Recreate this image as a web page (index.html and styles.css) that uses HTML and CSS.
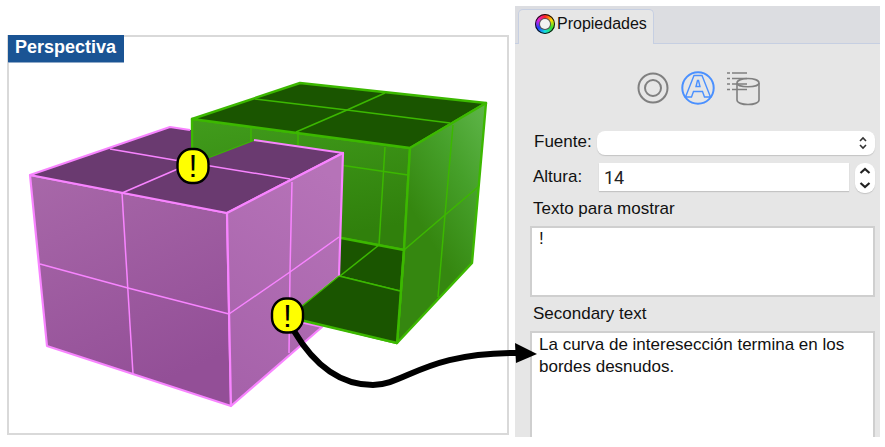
FILE: index.html
```html
<!DOCTYPE html>
<html lang="es">
<head>
<meta charset="utf-8">
<title>Propiedades</title>
<link rel="stylesheet" href="styles.css">
</head>
<body>
<div class="page">
  <section class="viewport">
    <div class="viewport-label">Perspectiva</div>
    <svg class="scene" viewBox="9 37 498 396" width="498" height="396">
      <defs>
        <linearGradient id="gRight" x1="0.9" y1="0" x2="0.5" y2="0.65">
          <stop offset="0" stop-color="#5cb346"/><stop offset="0.45" stop-color="#46a02a"/><stop offset="1" stop-color="#358710"/>
        </linearGradient>
        <linearGradient id="gFront" x1="0" y1="0" x2="0.3" y2="1">
          <stop offset="0" stop-color="#419c1c"/><stop offset="1" stop-color="#30800c"/>
        </linearGradient>
        <linearGradient id="pLeft" x1="0" y1="0" x2="0.4" y2="1">
          <stop offset="0" stop-color="#a868a9"/><stop offset="1" stop-color="#934f97"/>
        </linearGradient>
        <linearGradient id="pRight" x1="0.6" y1="0" x2="0.3" y2="1">
          <stop offset="0" stop-color="#b673b8"/><stop offset="1" stop-color="#a662aa"/>
        </linearGradient>
      </defs>
      <!-- green solid -->
      <g class="edge-green">
        <polygon class="fill-front" points="192,119 410,148 404,250 340,238 340,160 254,141 192,165"/>
        <polygon class="fill-dark" points="192,119 300,83 486,103 410,148"/>
        <polygon class="fill-right" points="410,148 486,103 472,263 397,343 404,250"/>
        <polygon class="fill-dark" points="336,237 404,250 397,343 296,318 296,311 339,276"/>
        <g class="thin">
          <polyline points="255,99 347,110 450,123"/>
          <polyline points="385,93 347,110 296,132"/>
          <polyline points="453,125 445,215 438,297"/>
          <polyline points="404,250 445,215 478,187"/>
          <line x1="251" y1="127" x2="251" y2="142"/>
          <line x1="298" y1="133" x2="298" y2="145"/>
          <line x1="385" y1="147" x2="379" y2="245"/>
          <line x1="340" y1="165" x2="408" y2="175"/>
          <line x1="379" y1="245" x2="296" y2="311"/>
          <line x1="339" y1="276" x2="400" y2="291"/>
        </g>
      </g>
      <!-- purple solid -->
      <g class="edge-pink">
        <polygon class="fill-pleft" points="30,175 227,213 231,406 47,346"/>
        <polygon class="fill-ptop" points="30,175 170,127 191,130 191,165 254,141 343,153 227,213"/>
        <polyline class="pink-edge" points="227,213 30,175 170,127 190,130"/>
        <polyline class="pink-edge" points="254,140 343,153 227,213"/>
        <polygon class="fill-pright" points="227,213 343,153 339,276 296,312 300,322 322,327 231,406"/>
        <g class="thin">
          <line x1="122" y1="193" x2="133" y2="374"/>
          <polyline points="40,264 128,288 229,314"/>
          <polyline points="229,314 290,272 339,237"/>
          <polyline points="292,182 290,272 289,353"/>
          <polyline points="110,149 180,161 290,179"/>
          <line x1="122" y1="193" x2="180" y2="168"/>
        </g>
      </g>
      <!-- green floor edge in front of the purple cut -->
      <polygon class="floor-front" points="339,276 296,311 296,319 397,343 400,291"/>
      <line class="floor-line" x1="339" y1="276" x2="296" y2="311"/>
      <line class="floor-line wide" x1="296" y1="319" x2="397" y2="343"/>
      <line class="floor-line" x1="339" y1="276" x2="400" y2="291"/>
      <line class="floor-line wide" x1="404" y1="250" x2="397" y2="343"/>
    </svg>
  </section>

  <aside class="panel">
    <div class="tabbar">
      <div class="tab">
        <span class="wheel"></span>
        <span class="tab-name">Propiedades</span>
      </div>
    </div>
    <div class="toolbar">
      <svg class="tool-a" width="32" height="32" viewBox="0 0 32 32">
        <circle cx="16" cy="16" r="14.5"/>
        <circle cx="16" cy="16" r="8"/>
      </svg>
      <svg class="tool-b" width="34" height="34" viewBox="0 0 34 34">
        <circle cx="17" cy="17" r="15.7"/>
        <path d="M4.500 26 L13 4.500 H21 L29.500 26 H23.500 L21.500 20.500 H12.500 L10.500 26 Z"/>
        <path d="M15 15.500 L16.500 9.500 H17.500 L19 15.500 Z"/>
      </svg>
      <svg class="tool-c" width="34" height="36" viewBox="0 0 34 36">
        <path class="dash" d="M0 2H3M0 7.500H3M0 13H3M0 18.500H3"/>
        <path class="dash" d="M5 2H20M5 7.500H20M5 13H20M5 18.500H20"/>
        <path d="M10 12 C10 6 32 6 32 12 V29 C32 35 10 35 10 29 Z"/>
        <path d="M10 12 C10 17 32 17 32 12"/>
      </svg>
    </div>
    <div class="form">
      <div class="row font-row">
        <span class="label font-label">Fuente:</span>
        <div class="select">
          <svg width="10" height="14" viewBox="0 0 10 14"><path d="M2 5 L5 2 L8 5 M2 9 L5 12 L8 9"/></svg>
        </div>
      </div>
      <div class="row height-row">
        <span class="label height-label">Altura:</span>
        <div class="input">14</div>
        <div class="stepper">
          <svg width="20" height="30" viewBox="0 0 20 30"><path d="M5.500 10 L10 6 L14.500 10 M5.500 20 L10 24 L14.500 20"/></svg>
        </div>
      </div>
      <div class="field-label first">Texto para mostrar</div>
      <div class="textbox short">!</div>
      <div class="field-label second">Secondary text</div>
      <div class="textbox tall">La curva de interesección termina en los bordes desnudos.</div>
    </div>
  </aside>

  <svg class="overlay" width="885" height="447" viewBox="0 0 885 447">
    <g class="badge">
      <rect x="177.500" y="149" width="31" height="34" rx="14" ry="15"/>
      <text x="193" y="177">!</text>
    </g>
    <path class="arrow-line" d="M294 331 C310 358 335 385 373 385 C405 385 425 352 520 353"/>
    <polygon class="arrow-head" points="537,354 515,343 516,363"/>
    <g class="badge">
      <rect x="272" y="298.500" width="31" height="34" rx="14" ry="15"/>
      <text x="287.500" y="326.500">!</text>
    </g>
  </svg>
</div>
</body>
</html>
```
FILE: styles.css
```css
* { box-sizing: border-box; }
html, body { margin: 0; height: 447px; overflow: hidden; background: #fff; }
body { font-family: "Liberation Sans", Arial, sans-serif; color: #111; }

.page { position: relative; display: flex; align-items: flex-start; gap: 6px; width: 885px; height: 447px; padding-left: 7px; }

/* viewport */
.viewport { position: relative; flex: none; width: 502px; height: 400px; margin-top: 35px; border: 2px solid #d9d9d9; background: #fff; }
.viewport-label { position: absolute; left: -1px; top: -2px; width: 116px; height: 27px; padding-left: 7px; background: #1a5494; box-shadow: 0 1px 0 #8fa9c8; color: #fff; font-weight: 700; font-size: 18px; line-height: 24px; }
.scene { display: block; }

.edge-green polygon { stroke: #3cb800; stroke-width: 2.4; stroke-linejoin: round; }
.thin polyline, .thin line { fill: none; stroke-width: 1.5; }
.edge-green .thin * { stroke: #3cb800; }
.edge-pink polygon { stroke: #f884ff; stroke-width: 2.2; stroke-linejoin: round; }
.edge-pink .thin * { stroke: #f884ff; }
.fill-dark { fill: #1a5500; }
.fill-front { fill: url(#gFront); }
.fill-right { fill: url(#gRight); }
.fill-pleft { fill: url(#pLeft); }
.edge-pink .fill-ptop { fill: #6a3a70; stroke: none; }
.pink-edge { fill: none; stroke: #f884ff; stroke-width: 2.2; stroke-linejoin: round; }
.fill-pright { fill: url(#pRight); }
.floor-front { fill: #1a5500; }
.floor-line { stroke: #3cb800; stroke-width: 1.5; }
.floor-line.wide { stroke-width: 2.4; }

/* panel */
.panel { display: flex; flex-direction: column; flex: none; width: 365px; height: 431px; margin-top: 6px; background: #e6e6e6; overflow: hidden; }
.tabbar { flex: none; height: 38px; padding: 3px 0 0 3px; background: #dcdde1; border-bottom: 1px solid #c6cfe2; }
.tab { display: flex; align-items: center; width: 136px; height: 35px; padding: 0 0 6px 16px; background: #e6e6e6; border: 1px solid #c6cfe2; border-bottom: none; border-radius: 5px 5px 0 0; }
.wheel { flex: none; width: 20px; height: 20px; margin-right: 2px; border-radius: 50%; background: conic-gradient(#ff2020, #ffe000, #30e030, #10e0e0, #2040ff, #e020e0, #ff2020); box-shadow: inset 0 0 0 1px #111; position: relative; }
.wheel::after { content: ""; position: absolute; inset: 5px; border-radius: 50%; background: #f2f2f2; box-shadow: 0 0 0 1px #555; }
.tab-name { font-size: 16px; color: #111; }

.toolbar { flex: none; display: flex; align-items: flex-start; height: 87px; padding: 27px 0 0 122px; gap: 12px; }
.toolbar svg { display: block; flex: none; fill: none; stroke-width: 2; }
.tool-a { stroke: #808080; margin-top: 1px; }
.tool-a circle { stroke-width: 2; }
.tool-b { stroke: #4a90ff; }
.tool-b circle { stroke-width: 2; }
.tool-b path { stroke-width: 1.4; stroke-linejoin: miter; }
.tool-c { stroke: #808080; }
.tool-c path { stroke-width: 1.6; }
.tool-c .dash { stroke-width: 1.4; }

.form { flex: 1; display: flex; flex-direction: column; padding: 0 5px 0 15px; min-height: 0; }
.row { display: flex; align-items: flex-start; flex: none; }
.label { font-size: 17px; line-height: 22px; }
.font-label { width: 67px; padding-left: 4px; }
.font-row { height: 24px; }
.select { flex: 1; display: flex; align-items: center; justify-content: flex-end; height: 24px; padding-right: 7px; background: #fff; border-radius: 8px; box-shadow: 0 1px 1px #c4c4c4; }
.select svg { fill: none; stroke: #333; stroke-width: 1.6; }
.height-row { margin-top: 8px; height: 30px; }
.height-label { width: 69px; padding: 3px 0 0 3px; }
.input { width: 250px; height: 28px; padding: 2px 0 0 5px; background: #fff; box-shadow: 0 1px 1px #c4c4c4; font-family: Roboto, sans-serif; font-size: 18px; line-height: 26px; color: #222; }
.stepper { width: 20px; height: 30px; margin-left: 6px; background: #fff; border-radius: 9px; box-shadow: 0 1px 1px #c4c4c4; }
.stepper svg { display: block; fill: none; stroke: #222; stroke-width: 2.2; }
.field-label { flex: none; padding-left: 3px; font-size: 17px; line-height: 20px; }
.field-label.first { margin-top: 6px; }
.field-label.second { margin-top: 7px; }
.textbox { flex: none; padding: 0 7px; background: #fff; border: 2px solid #cfcfcf; font-size: 17px; line-height: 22px; }
.textbox.short { height: 71px; margin-top: 7px; }
.textbox.tall { flex: 1; margin-top: 7px; padding-top: 1px; border-bottom: none; }

/* annotations above everything */
.overlay { position: absolute; left: 0; top: 0; pointer-events: none; }
.badge rect { fill: #ffff00; stroke: #000; stroke-width: 2.4; }
.badge text { font-family: "Liberation Sans", sans-serif; font-size: 32px; fill: #000; text-anchor: middle; }
.arrow-line { fill: none; stroke: #000; stroke-width: 6; }
.arrow-head { fill: #000; }
```
